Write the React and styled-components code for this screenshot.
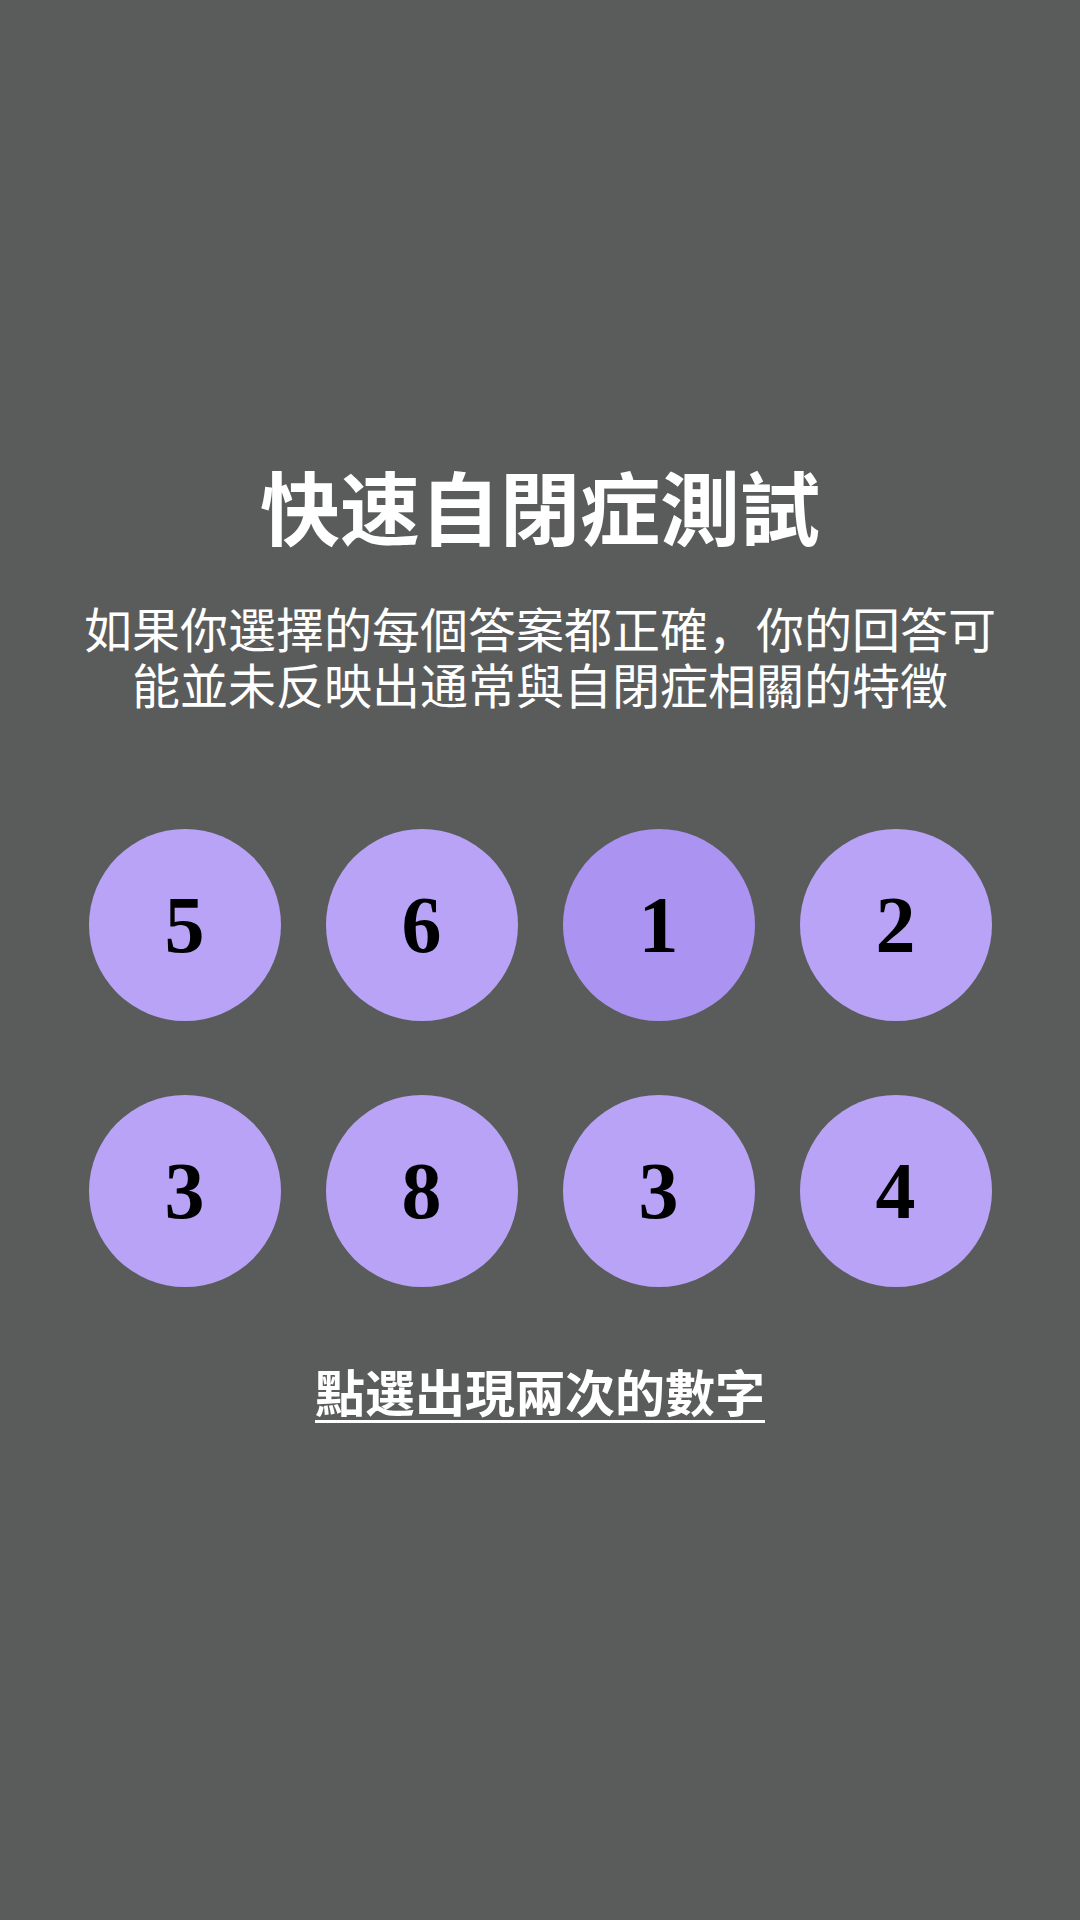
import React, { useState } from 'react';
import styled, { createGlobalStyle } from 'styled-components';

const GlobalStyle = createGlobalStyle`
  html, body {
    margin: 0;
    padding: 0;
    background: #5a5c5b;
  }
`;

const Page = styled.div`
  min-height: 1920px;
  background: #5a5c5b;
  display: flex;
  flex-direction: column;
  align-items: center;
  padding-top: 456px;
  box-sizing: border-box;
  font-family: "Noto Sans CJK SC", "Noto Sans CJK TC", "Noto Sans", sans-serif;
  color: #ffffff;
`;

const Title = styled.h1`
  margin: 0;
  font-size: 80px;
  line-height: 96px;
  font-weight: 700;
  text-align: center;
`;

const Subtitle = styled.p`
  margin: 47px 0 0;
  max-width: 930px;
  font-size: 48px;
  line-height: 56px;
  font-weight: 400;
  text-align: center;
`;

const Grid = styled.div`
  margin-top: 118px;
  display: grid;
  grid-template-columns: repeat(4, 192px);
  column-gap: 45px;
  row-gap: 74px;
`;

const NumberButton = styled.button`
  width: 192px;
  height: 192px;
  border: none;
  border-radius: 50%;
  padding: 0;
  display: flex;
  align-items: center;
  justify-content: center;
  background: ${(p) => (p.$active ? '#ab93f2' : '#b9a3f7')};
  color: #000;
  font-family: "Liberation Serif", "Times New Roman", serif;
  font-weight: 700;
  font-size: 80px;
  cursor: pointer;
`;

const Hint = styled.a`
  margin-top: 73px;
  font-size: 50px;
  line-height: 60px;
  font-weight: 700;
  color: #ffffff;
  text-decoration: underline;
  text-underline-offset: 8px;
  text-decoration-thickness: 3px;
`;

const numbers = [5, 6, 1, 2, 3, 8, 3, 4];

export default function App() {
  const [selected, setSelected] = useState(2);

  return (
    <>
      <GlobalStyle />
      <Page>
        <Title>快速自閉症測試</Title>
        <Subtitle>如果你選擇的每個答案都正確，你的回答可能並未反映出通常與自閉症相關的特徵</Subtitle>
        <Grid>
          {numbers.map((n, i) => (
            <NumberButton key={i} $active={selected === i} onClick={() => setSelected(i)}>
              {n}
            </NumberButton>
          ))}
        </Grid>
        <Hint>點選出現兩次的數字</Hint>
      </Page>
    </>
  );
}
